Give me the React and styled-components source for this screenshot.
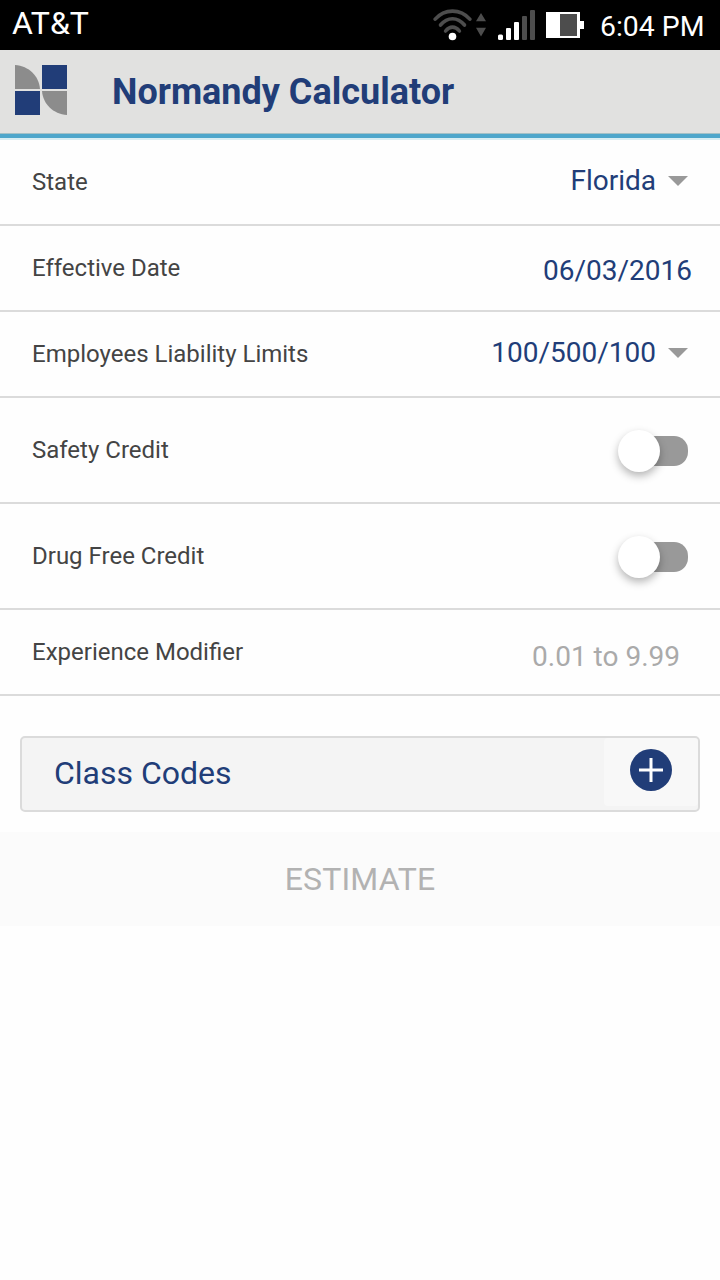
import React, { useState } from "react";
import styled, { createGlobalStyle } from "styled-components";

const GlobalStyle = createGlobalStyle`
  * {
    box-sizing: border-box;
  }

  body {
    margin: 0;
    background-color: #fefefe;
    font-family: Roboto, "Liberation Sans", sans-serif;
  }
`;

const Screen = styled.div`
  width: 720px;
  height: 1280px;
  display: flex;
  flex-direction: column;
  overflow: hidden;
`;

const StatusBar = styled.div`
  height: 50px;
  flex: none;
  display: flex;
  align-items: center;
  justify-content: space-between;
  padding: 0 16px 0 12px;
  background-color: #000;
  color: #fff;
`;

const Carrier = styled.span`
  font-size: 32px;
  line-height: 38px;
  padding-bottom: 5px;
`;

const StatusIcons = styled.div`
  display: flex;
  align-items: center;
`;

const Clock = styled.span`
  width: 104px;
  font-size: 28.4px;
  line-height: 34px;
  padding-top: 4px;
  margin-left: 16px;
  white-space: nowrap;
`;

const Header = styled.header`
  height: 88px;
  flex: none;
  display: flex;
  align-items: center;
  gap: 45px;
  margin-bottom: 2px;
  padding: 0 15px 4px;
  background-color: #e1e1e0;
  border-bottom: 4px solid #4ea6cb;
  box-shadow: inset 0 -1px 0 #a3c0c6, 0 2px 0 #d8edf3;
`;

const Title = styled.h1`
  margin: 0;
  padding-top: 4px;
  font-size: 36px;
  line-height: 42px;
  font-weight: 700;
  color: #213d78;
`;

const Row = styled.div`
  height: ${(props) => (props.$tall ? 106 : 86)}px;
  flex: none;
  display: flex;
  align-items: center;
  justify-content: space-between;
  padding: 0 32px;
  border-bottom: 2px solid #dbdbdb;
`;

const Label = styled.span`
  font-size: 24px;
  line-height: 28px;
  color: #444;
`;

const Select = styled.div`
  display: flex;
  align-items: center;
  gap: 12px;
  padding-bottom: 3px;
  font-size: 28px;
  line-height: 33px;
  color: #213d78;
`;

const Caret = styled.span`
  border: 10px solid transparent;
  border-top-color: #999;
  border-bottom: 0;
`;

const DateValue = styled.span`
  font-size: 28px;
  line-height: 33px;
  padding-top: 5px;
  margin-right: -4px;
  color: #213d78;
`;

const ModifierInput = styled.input`
  width: 200px;
  border: 0;
  outline: none;
  background: transparent;
  padding: 9px 8px 0 0;
  font-family: inherit;
  font-size: 28px;
  line-height: 33px;
  text-align: right;
  color: #213d78;

  &::placeholder {
    color: #aaa;
    opacity: 1;
  }
`;

const Track = styled.button`
  width: 64px;
  height: 30px;
  display: flex;
  align-items: center;
  justify-content: ${(props) => (props.$on ? "flex-end" : "flex-start")};
  border: 0;
  padding: 0;
  margin-top: 2px;
  border-radius: 14px;
  background-color: ${(props) => (props.$on ? "#213d78" : "#999")};
`;

const Knob = styled.span`
  width: 42px;
  height: 42px;
  flex: none;
  margin: 0 -6px;
  border-radius: 50%;
  background-color: #fff;
  box-shadow: 0 4px 9px rgba(0, 0, 0, 0.29);
`;

const ClassCodes = styled.section`
  height: 76px;
  flex: none;
  display: flex;
  justify-content: space-between;
  margin: 40px 20px 20px;
  border: 2px solid #dbdbdb;
  border-radius: 5px;
  background-color: #f4f4f4;
`;

const ClassTitle = styled.h2`
  margin: 0;
  padding: 17px 0 0 32px;
  font-size: 32px;
  line-height: 36px;
  font-weight: 400;
  color: #213d78;
`;

const AddButton = styled.button`
  width: 94px;
  height: 68px;
  display: flex;
  justify-content: center;
  align-items: flex-start;
  border: 0;
  padding: 11px 0 0;
  border-radius: 4px;
  background-color: #f8f8f8;
`;

const EstimateButton = styled.button`
  height: 94px;
  flex: none;
  border: 0;
  padding: 0;
  background-color: #fbfbfb;
  font-family: inherit;
  font-size: 32px;
  line-height: 38px;
  letter-spacing: 0.15px;
  color: #b2b2b2;
`;

const Logo = () => (
  <svg width="52" height="50" viewBox="0 0 52 50">
    <path d="M0 0C14 1 24 11 25 24H0Z" fill="#8c8c8c" />
    <path d="M27 0H52V24H27Z" fill="#213d78" />
    <path d="M0 26H25V50H0Z" fill="#213d78" />
    <path d="M27 26H52V50C38 49 28 39 27 26Z" fill="#8c8c8c" />
  </svg>
);

const WifiIcon = () => (
  <svg width="54" height="34" viewBox="0 0 54 34">
    <g fill="none" stroke="#4d4d4d" strokeWidth="3.6" strokeLinecap="round">
      <path d="M2.2 11.2C11.5 0.4 27.5 0.4 36.8 11.2" />
      <path d="M7.5 17C14.5 8.6 24.5 8.6 31.5 17" />
      <path d="M12.6 23C16.7 17.8 22.3 17.8 26.4 23" />
    </g>
    <circle cx="19.5" cy="28.5" r="3.8" fill="#fff" />
    <path d="M48 5L53 13.2H43Z M43 19.8H53L48 28.6Z" fill="#4d4d4d" />
  </svg>
);

const SignalIcon = () => (
  <svg width="37" height="30" viewBox="0 0 37 30">
    <rect x="0" y="24.5" width="5" height="5.5" rx="1.5" fill="#fff" />
    <rect x="8" y="18" width="5" height="12" rx="1" fill="#fff" />
    <rect x="16" y="12" width="5" height="18" rx="1" fill="#fff" />
    <rect x="24" y="6" width="5" height="24" rx="1" fill="#4d4d4d" />
    <rect x="32" y="0" width="5" height="30" rx="1" fill="#4d4d4d" />
  </svg>
);

const BatteryIcon = () => (
  <svg width="38" height="26" viewBox="0 0 38 26">
    <path d="M0 0H34V9H38V17H34V26H0Z" fill="#fff" />
    <path d="M14 2H31V24H14Z" fill="#4d4d4d" />
  </svg>
);

const PlusIcon = () => (
  <svg width="42" height="42" viewBox="0 0 42 42">
    <circle cx="21" cy="21" r="21" fill="#213d78" />
    <path d="M21 9V33M9 21H33" stroke="#fff" strokeWidth="3" />
  </svg>
);

const Spacer = styled.span`
  width: ${(props) => props.$width}px;
`;

function Toggle({ label }) {
  const [on, setOn] = useState(false);

  return (
    <Row $tall>
      <Label>{label}</Label>
      <Track
        $on={on}
        role="switch"
        aria-checked={on}
        aria-label={label}
        onClick={() => setOn(!on)}
      >
        <Knob />
      </Track>
    </Row>
  );
}

function SelectRow({ label, value }) {
  return (
    <Row>
      <Label>{label}</Label>
      <Select>
        {value}
        <Caret />
      </Select>
    </Row>
  );
}

export default function App() {
  return (
    <Screen>
      <GlobalStyle />
      <StatusBar>
        <Carrier>AT&amp;T</Carrier>
        <StatusIcons>
          <WifiIcon />
          <Spacer $width={11} />
          <SignalIcon />
          <Spacer $width={11} />
          <BatteryIcon />
          <Clock>6:04 PM</Clock>
        </StatusIcons>
      </StatusBar>
      <Header>
        <Logo />
        <Title>Normandy Calculator</Title>
      </Header>
      <SelectRow label="State" value="Florida" />
      <Row>
        <Label>Effective Date</Label>
        <DateValue>06/03/2016</DateValue>
      </Row>
      <SelectRow label="Employees Liability Limits" value="100/500/100" />
      <Toggle label="Safety Credit" />
      <Toggle label="Drug Free Credit" />
      <Row>
        <Label>Experience Modifier</Label>
        <ModifierInput placeholder="0.01 to 9.99" />
      </Row>
      <ClassCodes>
        <ClassTitle>Class Codes</ClassTitle>
        <AddButton aria-label="Add class code">
          <PlusIcon />
        </AddButton>
      </ClassCodes>
      <EstimateButton>ESTIMATE</EstimateButton>
    </Screen>
  );
}
